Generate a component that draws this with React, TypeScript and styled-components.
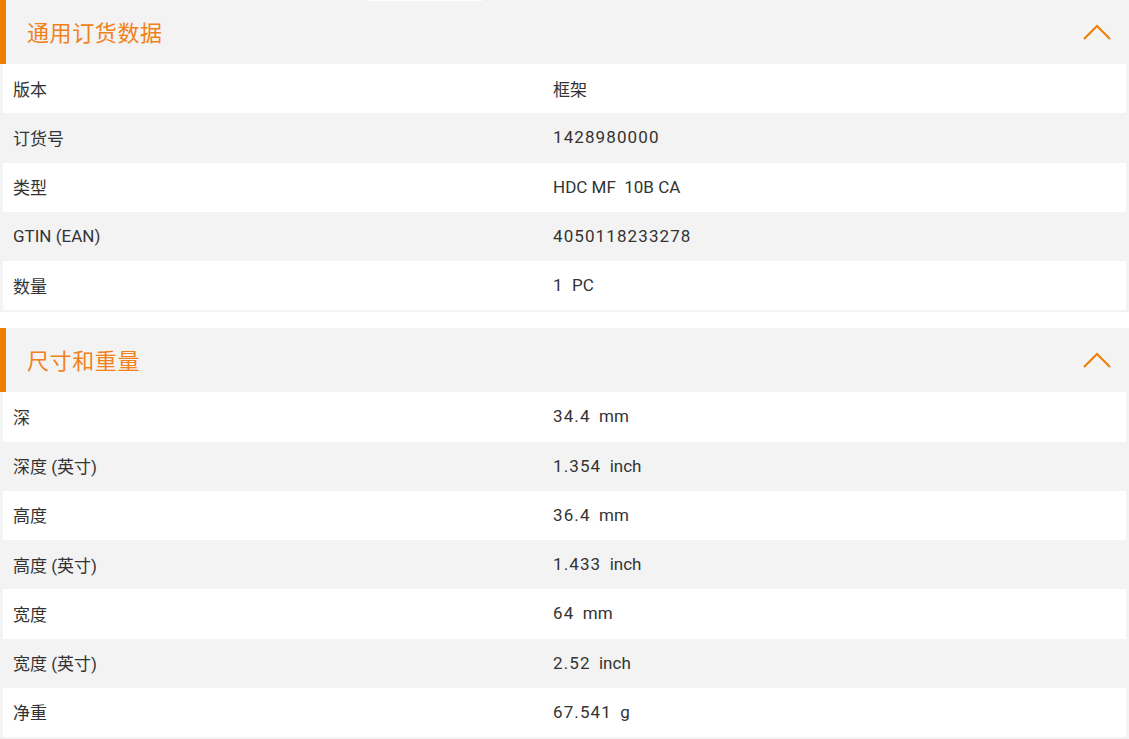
import React from "react";
import styled, { createGlobalStyle } from "styled-components";

const Global = createGlobalStyle`
  html, body { margin: 0; padding: 0; background: #ffffff; }
  body { font-family: Roboto, "Noto Sans CJK SC", sans-serif; color: #333333; }
`;

const Page = styled.div`
  position: relative;
  width: 1129px;
  display: flex;
  flex-direction: column;
  gap: 16px;
`;

const TopMark = styled.div`
  position: absolute;
  top: 0;
  left: 368px;
  width: 114px;
  height: 1px;
  background: #ffffff;
`;

const Section = styled.section`
  display: flex;
  flex-direction: column;
`;

const Header = styled.div`
  height: 64px;
  background: #f3f3f3;
  border-left: 6px solid #ef7d00;
  display: flex;
  align-items: center;
  justify-content: space-between;
  padding: 0 18px 0 21px;
  box-sizing: border-box;
`;

const Title = styled.h2`
  margin: 0 0 3px 0;
  font-family: "Noto Sans CJK SC", sans-serif;
  font-weight: 400;
  font-size: 22px;
  color: #f2811a;
  letter-spacing: 0.6px;
`;

const Body = styled.div`
  border-style: solid;
  border-color: #f3f3f3;
  border-width: 0 3px 2px 3px;
`;

const Row = styled.div<{ $alt: boolean }>`
  display: grid;
  grid-template-columns: 540px 1fr;
  align-items: center;
  height: 49.25px;
  background: ${(p) => (p.$alt ? "#f3f3f3" : "#ffffff")};
`;

const Cell = styled.div`
  padding: 0 10px 1px 10px;
  font-size: 17px;
  color: #333333;
  font-family: Roboto, "Noto Sans CJK SC", sans-serif;
  white-space: pre;
`;

const Num = styled.span`
  letter-spacing: 1.1px;
`;

const Chevron = () => (
  <svg width="28" height="16" viewBox="0 0 28 16" fill="none">
    <path d="M1 15 L14 2 L27 15" stroke="#ef7d00" strokeWidth="2" />
  </svg>
);

type Item = { label: string; value: string; unit?: string; spaced?: boolean };

const renderValue = (v: string, unit?: string, spaced?: boolean) => (
  <>
    {spaced ? <Num>{v}</Num> : v}
    {unit ? <>{"  "}{unit}</> : null}
  </>
);

const general: Item[] = [
  { label: "版本", value: "框架" },
  { label: "订货号", value: "1428980000", spaced: true },
  { label: "类型", value: "HDC MF  10B CA" },
  { label: "GTIN (EAN)", value: "4050118233278", spaced: true },
  { label: "数量", value: "1", unit: "PC", spaced: true },
];

const dims: Item[] = [
  { label: "深", value: "34.4", unit: "mm", spaced: true },
  { label: "深度 (英寸)", value: "1.354", unit: "inch", spaced: true },
  { label: "高度", value: "36.4", unit: "mm", spaced: true },
  { label: "高度 (英寸)", value: "1.433", unit: "inch", spaced: true },
  { label: "宽度", value: "64", unit: "mm", spaced: true },
  { label: "宽度 (英寸)", value: "2.52", unit: "inch", spaced: true },
  { label: "净重", value: "67.541", unit: "g", spaced: true },
];

const Block = ({ title, rows }: { title: string; rows: Item[] }) => (
  <Section>
    <Header>
      <Title>{title}</Title>
      <Chevron />
    </Header>
    <Body>
      {rows.map((r, i) => (
        <Row key={r.label} $alt={i % 2 === 1}>
          <Cell>{r.label}</Cell>
          <Cell>{renderValue(r.value, r.unit, r.spaced)}</Cell>
        </Row>
      ))}
    </Body>
  </Section>
);

export default function App() {
  return (
    <>
      <Global />
      <Page>
        <Block title="通用订货数据" rows={general} />
        <Block title="尺寸和重量" rows={dims} />
        <TopMark />
      </Page>
    </>
  );
}
